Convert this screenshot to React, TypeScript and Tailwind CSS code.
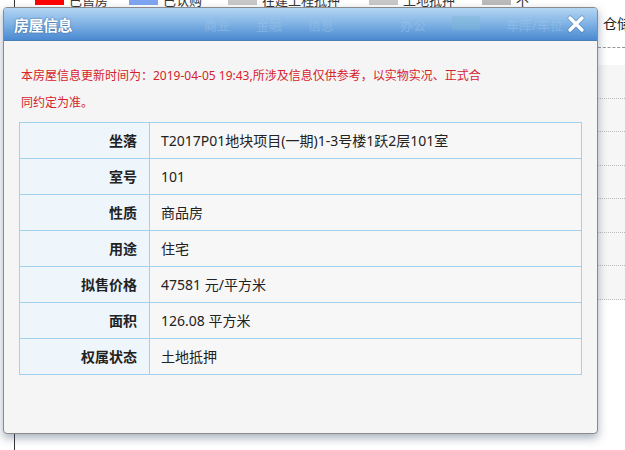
const rows: [string, string][] = [
  ["坐落", "T2017P01地块项目(一期)1-3号楼1跃2层101室"],
  ["室号", "101"],
  ["性质", "商品房"],
  ["用途", "住宅"],
  ["拟售价格", "47581 元/平方米"],
  ["面积", "126.08 平方米"],
  ["权属状态", "土地抵押"],
];

const font = { fontFamily: '"Noto Sans", "Noto Sans CJK SC", sans-serif' };

export default function App() {
  return (
    <div
      className="relative w-[625px] h-[450px] overflow-hidden bg-white text-[#222]"
      style={font}
    >
      {/* Page behind the dialog */}
      <div className="absolute left-[14px] top-[-7px] flex items-center gap-[5px] h-[14px] border-l border-[#333] pl-[20px] text-[13px] leading-[14px] text-[#333]">
        <span className="w-[29px] h-[10px] bg-[#ff0000]" />
        <span className="w-[55px]">已售房</span>
        <span className="w-[29px] h-[10px] bg-[#7ea6f0]" />
        <span className="w-[60px]">已认购</span>
        <span className="w-[29px] h-[10px] bg-[#c8c8c8]" />
        <span className="w-[102px]">在建工程抵押</span>
        <span className="w-[29px] h-[10px] bg-[#c8c8c8]" />
        <span className="w-[74px]">土地抵押</span>
        <span className="w-[29px] h-[10px] bg-[#bbb]" />
        <span>不</span>
      </div>
      <div className="absolute left-[603px] top-[13px] text-[14px] whitespace-nowrap">仓储</div>
      <div className="absolute left-[598px] top-[47px] w-[27px] border-t border-dashed border-[#999]" />
      <div className="absolute left-[598px] top-[65px] w-[27px] h-[235px] bg-[#f6f6f6] flex flex-col">
        {[0, 1, 2, 3, 4, 5, 6].map((i) => (
          <div key={i} className="h-[38px] border-b border-dotted border-[#bbb]" />
        ))}
      </div>
      <div className="absolute left-[14px] top-[430px] h-[20px] border-l border-[#333]" />

      {/* Dialog */}
      <div className="absolute left-[3px] top-[7px] w-[595px] h-[427px] rounded-[4px] border border-[#8a8a8a] bg-[#f5f5f5] shadow-[0_4px_10px_rgba(60,80,110,0.45)] overflow-hidden">
        <div className="relative h-[33px] bg-gradient-to-b from-[#b3d5f3] via-[#7fb2e4] to-[#4a8ad0] border-b border-[#4a7fb8]">
          <div className="absolute left-[200px] top-[8px] flex gap-[26px] text-[13px] text-[#a6c9ea] opacity-40 whitespace-nowrap">
            <span>商业</span>
            <span>金融</span>
            <span>信息</span>
            <span className="ml-[40px]">办公</span>
            <span className="w-[28px] h-[14px] bg-[#7fb9d6]" />
            <span>车库/车位</span>
            <span className="ml-[40px]">工业</span>
          </div>
          <div className="absolute left-[10px] top-[6px] text-[15px] font-bold text-white tracking-[-0.5px] [text-shadow:0_0_2px_#2a5a90]">
            房屋信息
          </div>
          <div className="absolute left-[562px] top-[6px] w-[20px] h-[20px]">
            <svg viewBox="0 0 20 20" className="w-[20px] h-[20px]">
              <path
                d="M4 4 L16 16 M16 4 L4 16"
                stroke="#2a5f9a"
                strokeWidth="5"
                strokeLinecap="round"
                opacity="0.35"
              />
              <path
                d="M4 4 L16 16 M16 4 L4 16"
                stroke="#fff"
                strokeWidth="3.4"
                strokeLinecap="round"
              />
            </svg>
          </div>
        </div>

        <div className="px-[15px] pt-[21px]">
          <p className="w-[466px] text-[12px] leading-[27px] text-[#d6232a] pl-[2px]">
            本房屋信息更新时间为：2019-04-05 19:43,所涉及信息仅供参考，以实物实况、正式合同约定为准。
          </p>
          <table className="mt-[6px] w-[563px] border-collapse text-[14px]">
            <tbody>
              {rows.map(([k, v]) => (
                <tr key={k} className="h-[36px]">
                  <td className="w-[130px] border border-solid border-[#a2d1ef] bg-[#eef5fb] text-right pr-[12px] font-bold">
                    {k}
                  </td>
                  <td className="border border-solid border-[#a2d1ef] bg-[#f7f7f7] pl-[11px]">
                    {v}
                  </td>
                </tr>
              ))}
            </tbody>
          </table>
        </div>
      </div>
    </div>
  );
}
